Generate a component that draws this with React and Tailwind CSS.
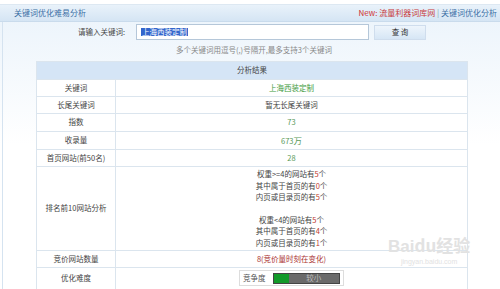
import React from 'react';

const font = { fontFamily: '"Noto Sans CJK SC", "Noto Sans", sans-serif' };

const Row = ({ label, children, className = 'h-[17px]' }) => (
    <tr className={className}>
        <td className="w-[79px] border border-[#dbe5ee] text-center text-[#444]">{label}</td>
        <td className="border border-[#dbe5ee] text-center">{children}</td>
    </tr>
);

const Red = ({ children }) => <span className="text-[#c0392b]">{children}</span>;

const App = () => {
    return (
        <div
            style={font}
            className="relative h-[289px] w-[500px] overflow-hidden bg-gradient-to-b from-[#eaf3fb] via-white to-white text-[7.5px] leading-none"
        >
            <div className="h-[5px] border-b border-[#dde8f2] bg-white" />
            {/* titulo */}
            <div className="flex h-[17px] items-center justify-between border-b border-[#c9dbec] bg-gradient-to-b from-[#e9f2fa] to-[#d5e5f4] pl-[14px] pr-[3px]">
                <span className="text-[8px] text-[#3b6ea5]">关键词优化难易分析</span>
                <span className="text-[8px]">
                    <span className="text-[#d0302f]">New: </span>
                    <span className="text-[#c83a3a]">流量利器词库网</span>
                    <span className="text-[#8aa]"> | </span>
                    <span className="text-[#3b6ea5]">关键词优化分析</span>
                </span>
            </div>
            <div className="ml-[2px] border-l border-[#d5e3f0]">
                {/* buscador */}
                <div className="flex items-center pt-[2px]">
                    <span className="w-[128px] pr-[6px] text-right text-[#444]">请输入关键词:</span>
                    <div className="ml-[5px] flex h-[16px] w-[233px] items-center border border-[#b5c7d9] bg-white px-[4px]">
                        <span className="bg-[#3366cc] px-px text-[7.5px] text-white">上海西装定制</span>
                    </div>
                    <button className="ml-[5px] h-[15px] w-[52px] border border-[#cfdded] bg-gradient-to-b from-[#eef5fc] to-[#d6e6f5] text-[7.5px] text-[#333]">
                        查 询
                    </button>
                </div>
                <div className="pl-[173px] pt-[6px] text-[#888]">多个关键词用逗号(,)号隔开,最多支持3个关键词</div>
                {/* resultados */}
                <table className="ml-[33px] mt-[7px] w-[432px] border-collapse bg-white">
                    <tbody>
                        <tr className="h-[18px] bg-[#d5e5f6]">
                            <td colSpan={2} className="border border-[#dbe5ee] text-center text-[#444]">
                                分析结果
                            </td>
                        </tr>
                        <Row label="关键词">
                            <span className="text-[#3d9a3d]">上海西装定制</span>
                        </Row>
                        <Row label="长尾关键词">
                            <span className="text-[#444]">暂无长尾关键词</span>
                        </Row>
                        <Row label="指数" className="h-[18px]">
                            <span className="text-[#5a9a5a]">73</span>
                        </Row>
                        <Row label="收录量" className="h-[18px]">
                            <span className="text-[#5a9a5a]">
                                673<span className="text-[8.5px]">万</span>
                            </span>
                        </Row>
                        <Row label="首页网站(前50名)">
                            <span className="text-[#5a9a5a]">28</span>
                        </Row>
                        <Row label="排名前10网站分析" className="h-[84px]">
                            <div className="flex flex-col items-center gap-[4px] text-[#444]">
                                <span>权重&gt;=4的网站有<Red>5</Red>个</span>
                                <span>其中属于首页的有<Red>0</Red>个</span>
                                <span>内页或目录页的有<Red>5</Red>个</span>
                                <span className="mt-[11px]">权重&lt;4的网站有<Red>5</Red>个</span>
                                <span>其中属于首页的有<Red>4</Red>个</span>
                                <span>内页或目录页的有<Red>1</Red>个</span>
                            </div>
                        </Row>
                        <Row label="竞价网站数量">
                            <span className="text-[#a33]">8(竞价量时刻在变化)</span>
                        </Row>
                        <Row label="优化难度" className="h-[22px]">
                            <div className="flex justify-center">
                                <div className="flex h-[16px] w-[105px] items-center border border-[#ddd] bg-white px-[3px]">
                                    <span className="text-[#555]">竞争度</span>
                                    <div className="ml-[7px] flex h-[11px] flex-1 border border-[#444] bg-[#6a6a6a]">
                                        <div className="w-[15px] bg-[#129a2a]" />
                                        <div className="flex flex-1 items-center justify-center text-[#bbb]">较小</div>
                                    </div>
                                </div>
                            </div>
                        </Row>
                    </tbody>
                </table>
            </div>
            {/* marca de agua */}
            <div className="pointer-events-none absolute left-[388px] top-[236px] flex flex-col items-center text-[#e2e2e2]" style={{ fontFamily: '"Liberation Sans", sans-serif' }}>
                <span className="text-[17px] font-bold leading-none">Bai<span style={font}>du经验</span></span>
                <span className="mt-[3px] text-[7px]">jingyan.baidu.com</span>
            </div>
        </div>
    );
};

export default App;
